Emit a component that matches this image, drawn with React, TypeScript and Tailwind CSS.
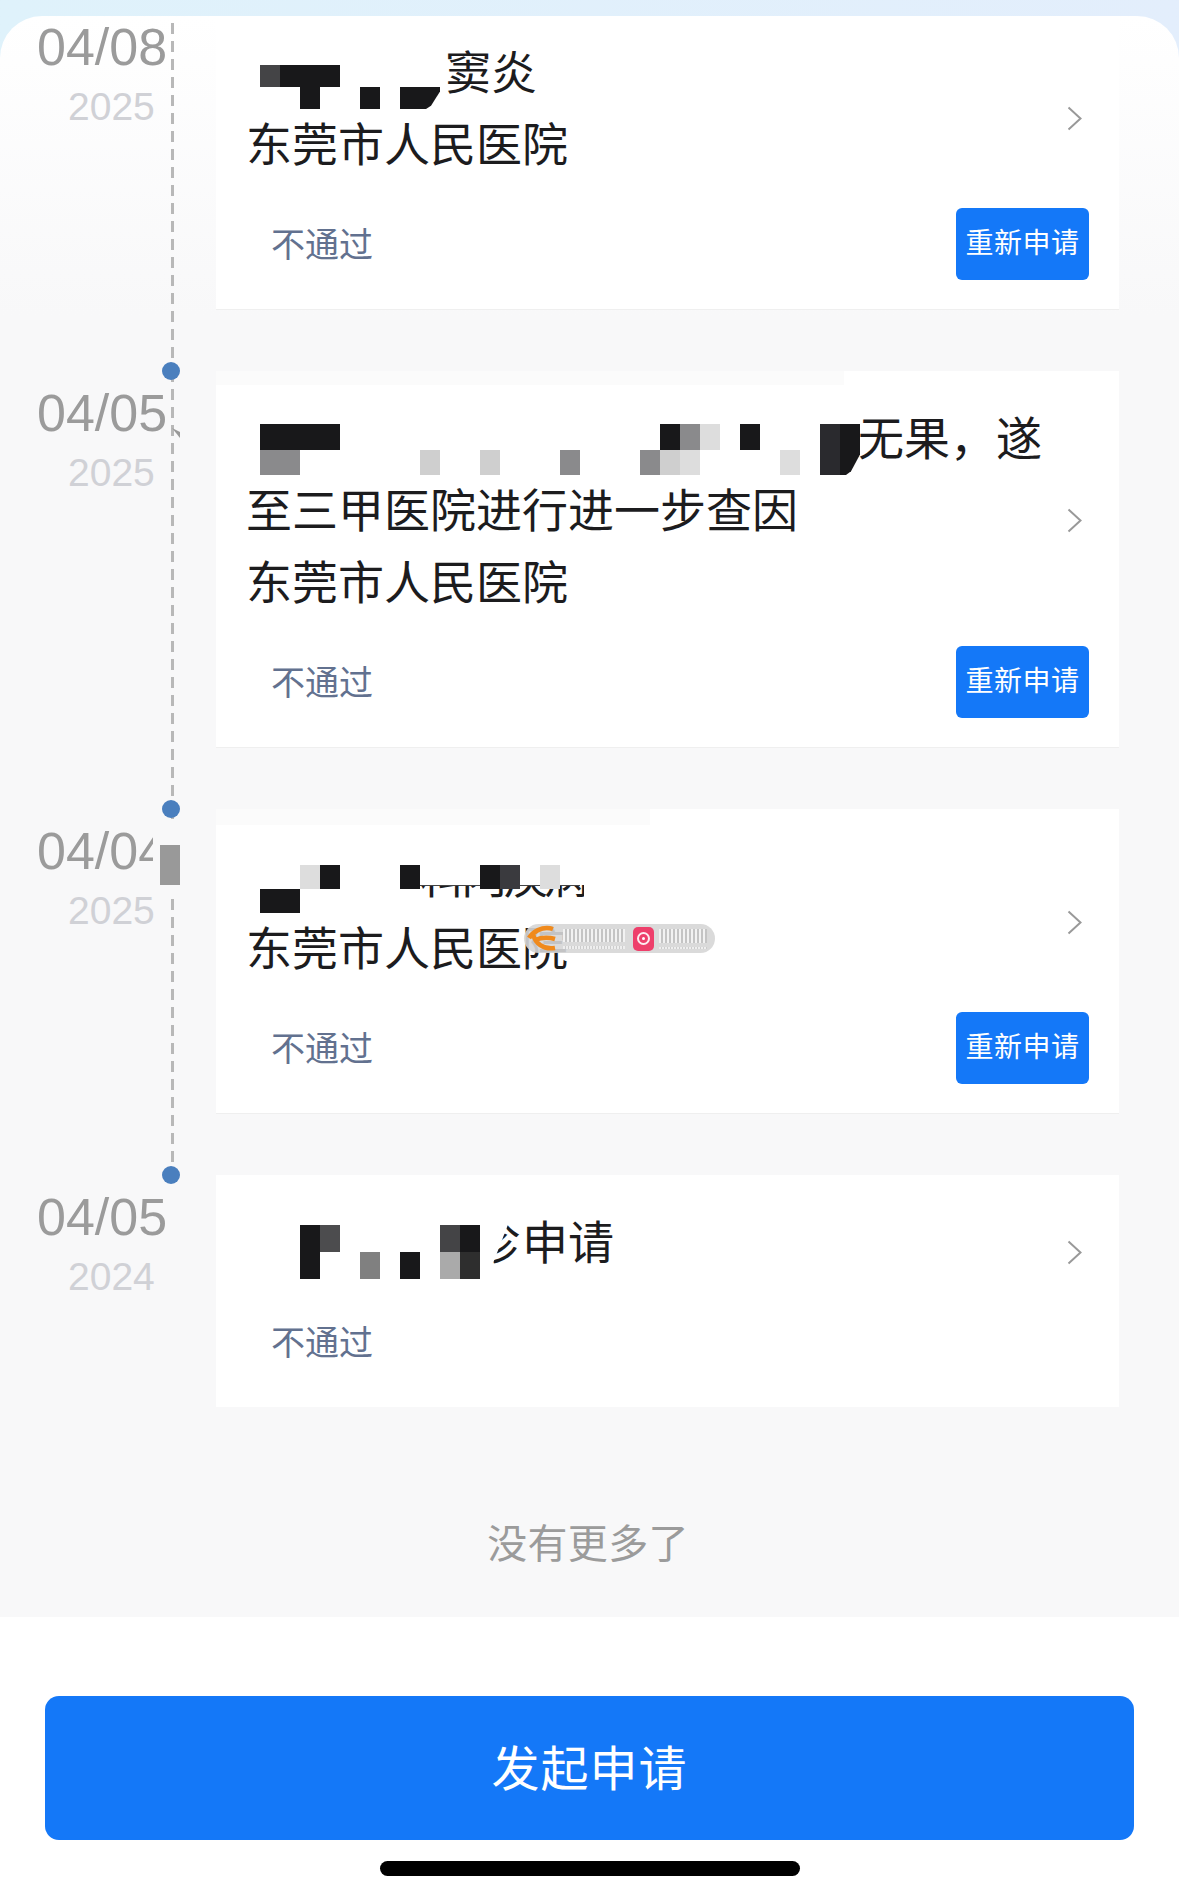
const font = "font-['Liberation_Sans','Noto_Sans_CJK_SC',sans-serif]";

const BLACK = "bg-[#18181a]";
const GRAY = "bg-[#8a8a8c]";
const LIGHT = "bg-[#cfcfcf]";
const PALE = "bg-[#dddddd]";
const CUT = "bg-[#18181a] [clip-path:polygon(0_0,100%_0,100%_20%,55%_85%,30%_100%,0_100%)]";
const PANEL = "bg-[#f8f8f9]";

type MosaicCell = [number, number, string];

// redacted part of a title: [row, col, colour], cells are 20x20
const Mosaic = ({ cols, cells, className }: { cols: string; cells: MosaicCell[]; className: string }) => (
  <div className={`grid shrink-0 auto-rows-[20px] grid-rows-2 ${cols} ${className}`}>
    {cells.map(([row, col, color]) => (
      <div key={`${row}-${col}`} className={color} style={{ gridRow: row + 1, gridColumn: col + 1 }} />
    ))}
  </div>
);

const Chevron = () => (
  <svg className="mt-[24px] mr-[37px] h-[25px] w-[15px] shrink-0" viewBox="0 0 15 25" fill="none">
    <path d="M1.5 1.5L13.5 12.5L1.5 23.5" stroke="#999999" strokeWidth="2" />
  </svg>
);

const Card = ({ children, retry = true, patch }: { children: React.ReactNode; retry?: boolean; patch?: string }) => (
  <div className={`relative flex-1 bg-white ${retry ? "border-b border-[#efefef]" : ""}`}>
    {patch && <div className={`absolute top-0 left-0 ${patch} bg-[#fbfbfb]`} />}
    <div className="flex items-center justify-between">
      <div className="pt-[32px] pb-[27px] pl-[30px] text-[46px] leading-[72px] text-[#1c1c1e]">{children}</div>
      <Chevron />
    </div>
    <div className="mb-[29px] flex h-[72px] items-center justify-between pr-[30px] pl-[55px]">
      <span className="pt-[2px] text-[34px] text-[#62718f]">不通过</span>
      {retry && (
        <button className="flex h-[72px] w-[133px] items-center justify-center rounded-[6px] bg-[#1478f8] text-[28px] tracking-[0.5px] text-white">
          重新申请
        </button>
      )}
    </div>
  </div>
);

const Row = ({
  date,
  year,
  last = false,
  children,
}: {
  date: string;
  year: string;
  last?: boolean;
  children: React.ReactNode;
}) => (
  <div className={`relative flex pr-[60px] ${last ? "" : "pb-[61px]"}`}>
    <div className="relative w-[216px] shrink-0 pt-[12px] pl-[37px]">
      {!last && (
        <div className="absolute top-0 bottom-[-61px] left-[171px] w-[3px] bg-[repeating-linear-gradient(to_bottom,#b8b8b8_0,#b8b8b8_11px,transparent_11px,transparent_18px)]" />
      )}
      <div className="absolute top-[-9px] left-[162px] h-[18px] w-[18px] rounded-full bg-[#4a7fbe]" />
      <div className="text-[52px] leading-[60px] text-[#9b9b9b]">{date}</div>
      <div className="mt-[6px] ml-[31px] text-[39px] leading-[48px] text-[#d0d1d6]">{year}</div>
    </div>
    {children}
  </div>
);

const Watermark = () => (
  <div className="absolute top-[115px] left-[308px] flex h-[29px] w-[191px] items-center rounded-full bg-[#d6d6d6]/90">
    <svg className="ml-[1px] h-[27px] w-[34px] shrink-0" viewBox="0 0 34 27" fill="none">
      <path d="M28 4C17 0 7 8 4 13M8 9C10 18 18 25 30 23M10 15C17 12 23 12 30 14" stroke="#f08a1c" strokeWidth="4.5" />
    </svg>
    <div className="ml-[4px] flex h-[20px] w-[62px] flex-col justify-between">
      <div className="h-[13px] bg-[repeating-linear-gradient(to_right,#f2f2f2_0,#f2f2f2_2px,#c4c4c4_2px,#c4c4c4_4px)]" />
      <div className="h-[3px] bg-[repeating-linear-gradient(to_right,#eeeeee_0,#eeeeee_2px,#cccccc_2px,#cccccc_3px)]" />
    </div>
    <div className="ml-[8px] flex h-[24px] w-[21px] items-center justify-center rounded-[5px] bg-[#ee3f6b]">
      <div className="flex h-[13px] w-[13px] items-center justify-center rounded-full border-2 border-white/90">
        <div className="h-[3px] w-[3px] rounded-full bg-white" />
      </div>
    </div>
    <div className="ml-[5px] flex h-[20px] w-[48px] flex-col justify-between">
      <div className="h-[14px] bg-[repeating-linear-gradient(to_right,#f2f2f2_0,#f2f2f2_2px,#c4c4c4_2px,#c4c4c4_4px)]" />
      <div className="h-[2px] bg-[repeating-linear-gradient(to_right,#eeeeee_0,#eeeeee_2px,#cccccc_2px,#cccccc_3px)]" />
    </div>
  </div>
);

export default function App() {
  return (
    <div className={`flex h-[1897px] w-[1179px] flex-col overflow-hidden bg-gradient-to-r from-[#dff2fb] to-[#e3eefc] pt-[16px] ${font}`}>
      <div className="flex-1 overflow-hidden rounded-t-[42px] bg-[linear-gradient(to_bottom,#ffffff_0,#f8f8f9_300px)]">
        <div className="-mt-[11px]">
          <Row date="04/08" year="2025">
            <Card>
              <div className="flex">
                <Mosaic
                  cols="grid-cols-[repeat(9,20px)]"
                  className="mt-[28px] ml-[14px]"
                  cells={[
                    [0, 0, "bg-[#444446]"],
                    [0, 1, BLACK],
                    [0, 2, BLACK],
                    [0, 3, BLACK],
                    [1, 2, BLACK],
                    [1, 5, BLACK],
                    [1, 7, BLACK],
                    [1, 8, CUT],
                  ]}
                />
                <span className="ml-[5px]">窦炎</span>
              </div>
              <div>东莞市人民医院</div>
            </Card>
          </Row>

          <Row date="04/05" year="2025">
            <div className="absolute top-[57px] left-[172px] h-[10px] w-[8px] bg-[#999999] [clip-path:polygon(0_0,100%_40%,100%_100%)]" />
            <Card patch="h-[14px] w-[628px]">
              <div className="flex">
                <Mosaic
                  cols="grid-cols-[repeat(30,20px)]"
                  className="mt-[21px] ml-[14px]"
                  cells={[
                    [0, 0, BLACK],
                    [0, 1, BLACK],
                    [0, 2, BLACK],
                    [0, 3, BLACK],
                    [1, 0, GRAY],
                    [1, 1, GRAY],
                    [1, 8, LIGHT],
                    [1, 11, LIGHT],
                    [1, 15, GRAY],
                    [1, 19, GRAY],
                    [1, 20, LIGHT],
                    [1, 21, PALE],
                    [0, 20, BLACK],
                    [0, 21, GRAY],
                    [0, 22, PALE],
                    [0, 24, BLACK],
                    [1, 26, PALE],
                    [0, 28, "bg-[#2a2a2e]"],
                    [1, 28, "bg-[#2a2a2e]"],
                    [0, 29, BLACK],
                    [1, 29, CUT],
                  ]}
                />
                <span className="-ml-[2px]">无果，遂</span>
              </div>
              <div>至三甲医院进行进一步查因</div>
              <div>东莞市人民医院</div>
            </Card>
          </Row>

          <Row date="04/04" year="2025">
            {/* the edit over this date hides the line and the end of the last digit */}
            <div className={`absolute top-[10px] left-[153px] h-[79px] w-[29px] ${PANEL}`} />
            <div className="absolute top-[36px] left-[160px] h-[40px] w-[20px] bg-[#999999]" />
            <Card patch="h-[16px] w-[434px]">
              <div className="relative flex h-[72px]">
                <span className="absolute top-0 left-[174px] tracking-[-5px] whitespace-nowrap [clip-path:inset(44px_0_0_0)]">
                  科内疾病
                </span>
                <div className="absolute top-[44px] left-[174px] h-[1px] w-[160px] bg-[#444444]" />
                <Mosaic
                  cols="grid-cols-[repeat(15,20px)]"
                  className="relative mt-[24px] ml-[14px]"
                  cells={[
                    [0, 2, PALE],
                    [0, 3, BLACK],
                    [1, 0, BLACK],
                    [1, 1, BLACK],
                    [0, 7, BLACK],
                    [0, 11, BLACK],
                    [0, 12, "bg-[#3a3a3e]"],
                    [0, 14, PALE],
                  ]}
                />
              </div>
              <div>东莞市人民医院</div>
              <Watermark />
            </Card>
          </Row>

          <Row date="04/05" year="2024" last>
            <Card retry={false}>
              <div className="flex">
                <Mosaic
                  cols="grid-cols-[repeat(11,20px)]"
                  className="mt-[18px] ml-[14px]"
                  cells={[
                    [0, 2, BLACK],
                    [1, 2, BLACK],
                    [0, 3, "bg-[#4c4c4e]"],
                    [1, 5, "bg-[#808080]"],
                    [1, 7, BLACK],
                    [0, 9, "bg-[#444446]"],
                    [1, 9, "bg-[#aaaaaa]"],
                    [0, 10, BLACK],
                    [1, 10, "bg-[#2e2e2e]"],
                  ]}
                />
                <span className="ml-[13px] flex w-[27px] justify-end overflow-hidden [clip-path:polygon(55%_25%,100%_25%,100%_100%,0_100%,0_78%)]">
                  诊
                </span>
                <span className="ml-[2px]">申请</span>
              </div>
            </Card>
          </Row>
        </div>

        <div className="mt-[109px] pr-[3px] text-center text-[40px] leading-[56px] tracking-[0.3px] text-[#9b9b9b]">没有更多了</div>
      </div>

      <div className="flex h-[280px] shrink-0 flex-col items-center bg-white pt-[79px]">
        <button className="flex h-[144px] w-[1089px] items-center justify-center rounded-[14px] bg-[#1478f8] pt-[3px] text-[48px] tracking-[1px] text-white">
          发起申请
        </button>
        <div className="mt-[21px] h-[15px] w-[420px] rounded-full bg-black" />
      </div>
    </div>
  );
}
